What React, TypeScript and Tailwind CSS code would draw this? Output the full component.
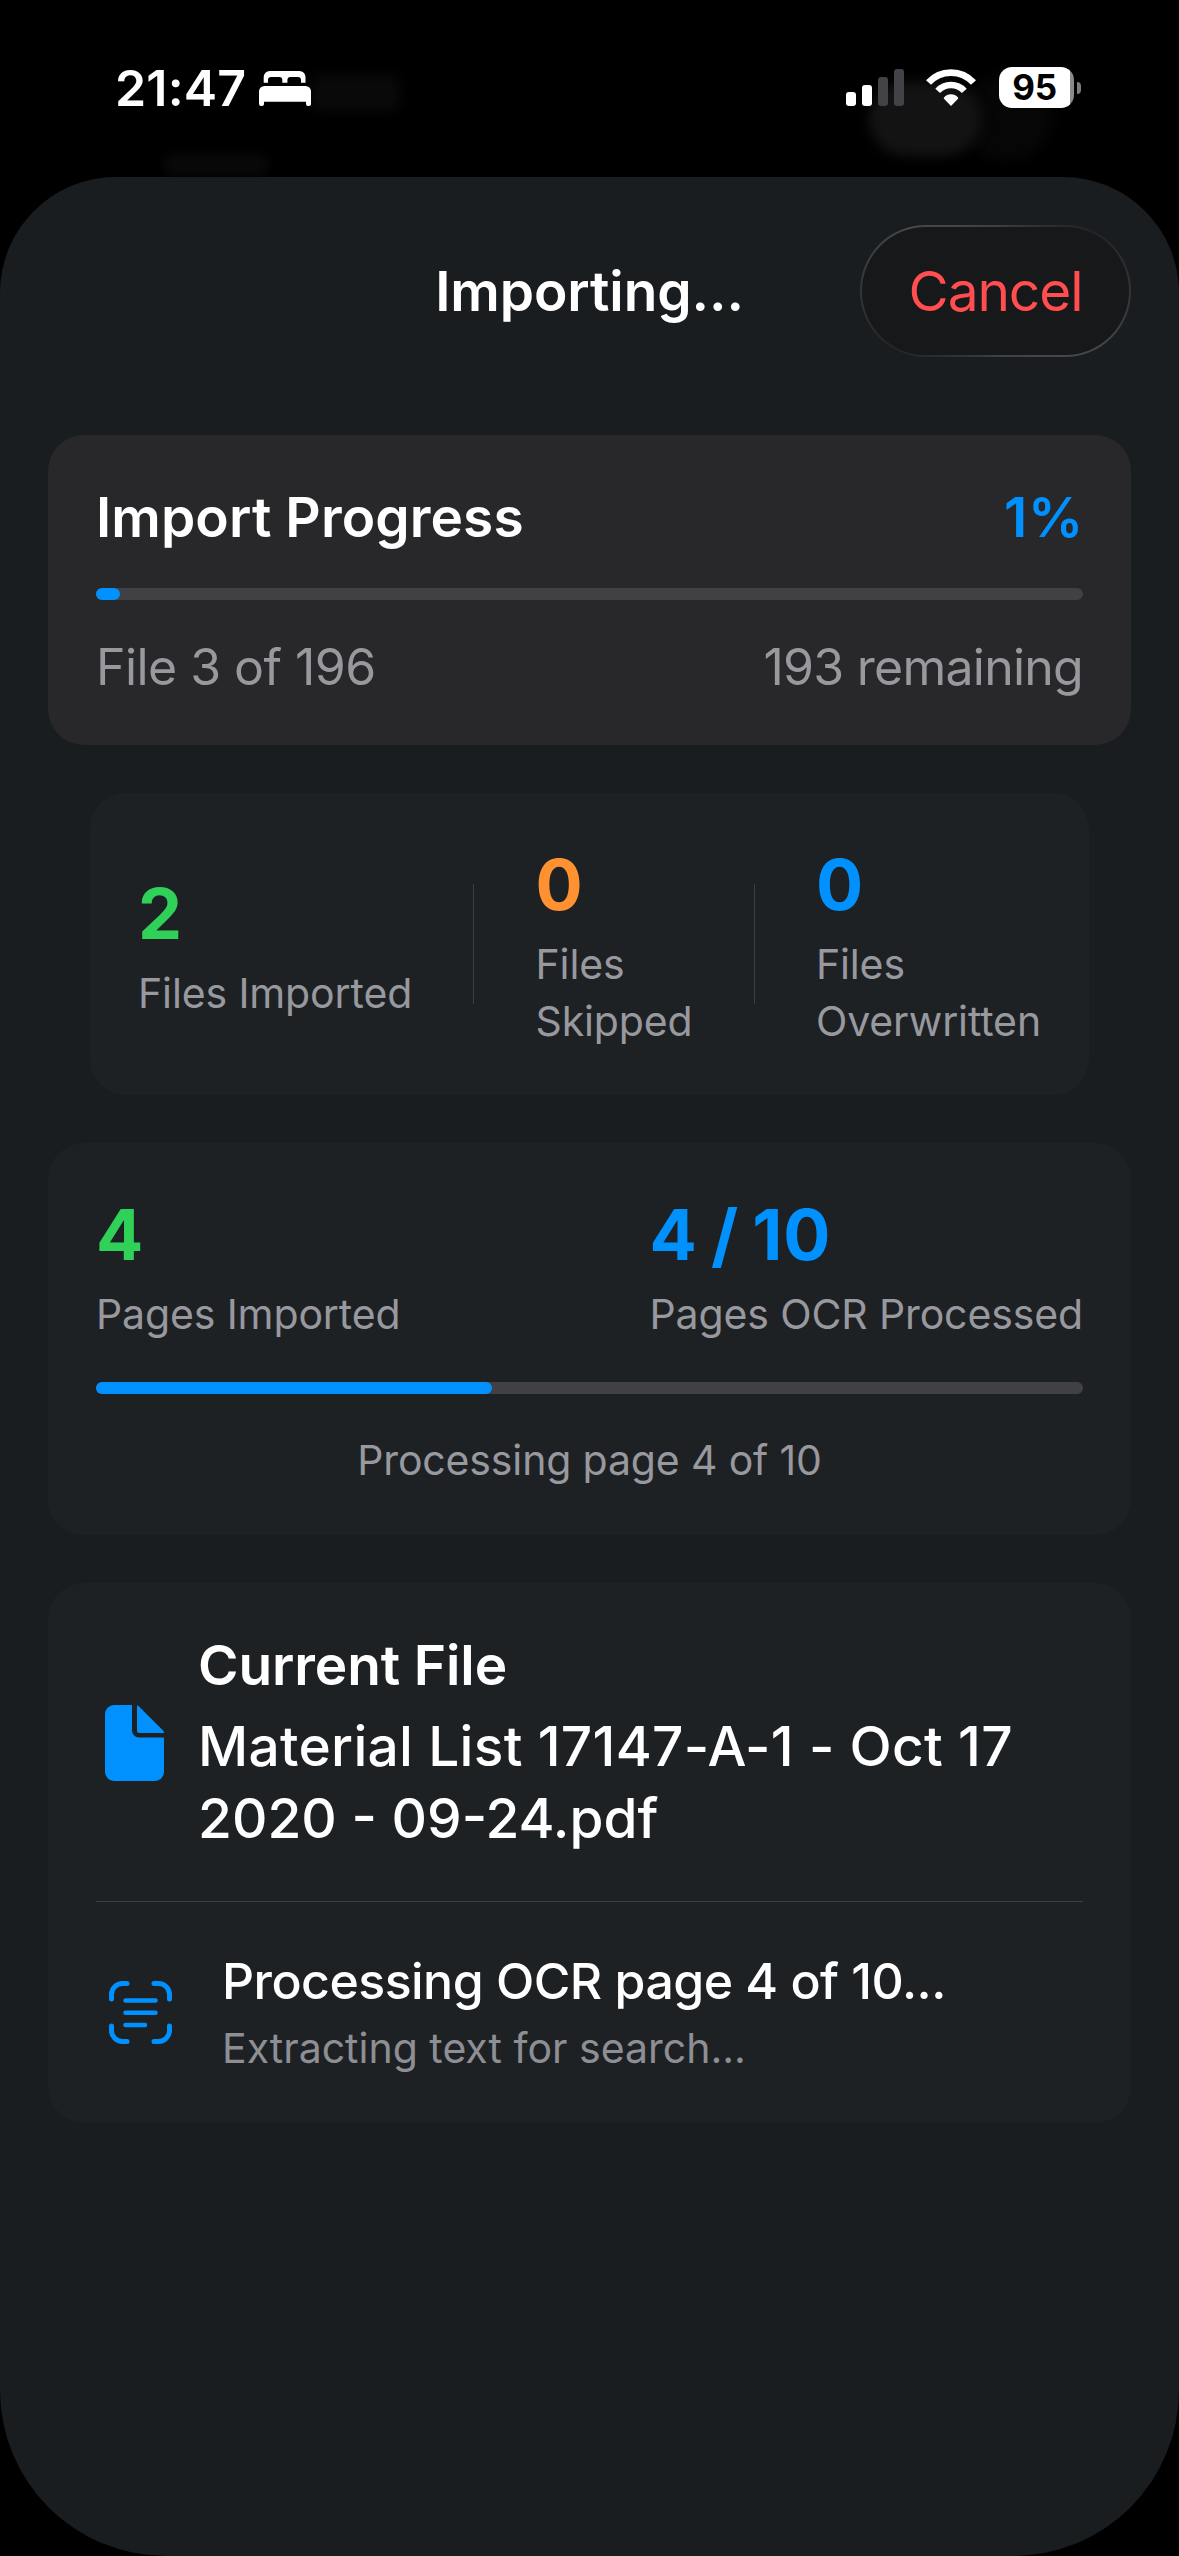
import type { ReactNode } from "react";

function BedIcon() {
  return (
    <svg width="52" height="35" viewBox="0 0 52 35" fill="white">
      <path d="M4.7 11.7V6a6 6 0 0 1 6-6h29.8a6 6 0 0 1 6 6v5.7h-4.5V9a3 3 0 0 0-3-3h-7.6a3 3 0 0 0-3 3v2.7h-5.1V9a3 3 0 0 0-3-3H12a3 3 0 0 0-3 3v2.7z" />
      <path d="M0 20.5a5.500 5.500 0 0 1 5.500-5.500h41a5.500 5.500 0 0 1 5.500 5.500V33a2 2 0 0 1-2 2h-1a2 2 0 0 1-2-2v-2.300H5V33a2 2 0 0 1-2 2H2a2 2 0 0 1-2-2z" />
    </svg>
  );
}

function SignalIcon() {
  return (
    <svg width="58" height="37" viewBox="0 0 58 37">
      <rect x="0" y="23" width="10" height="14" rx="3" fill="#fff" />
      <rect x="16" y="16" width="10" height="21" rx="3" fill="#fff" />
      <rect x="32" y="8" width="10" height="29" rx="3" fill="#434347" />
      <rect x="48" y="0" width="10" height="37" rx="3" fill="#434347" />
    </svg>
  );
}

function WifiIcon() {
  return (
    <svg width="50" height="37" viewBox="0 0 50 37" fill="none">
      <path d="M2.5 13.5a30.4 30.4 0 0 1 45 0" stroke="#fff" strokeWidth="6.8" />
      <path d="M11.7 21.9a18 18 0 0 1 26.6 0" stroke="#fff" strokeWidth="6.5" />
      <path d="M25 37l-7-7.3a1 1 0 0 1 0-1.3a9.500 9.500 0 0 1 14 0a1 1 0 0 1 0 1.300z" fill="#fff" />
    </svg>
  );
}

function Battery() {
  return (
    <div className="ml-px flex items-center gap-[3px]">
      <div className="flex h-[41px] w-[75px] items-center justify-center rounded-[13px] bg-[linear-gradient(90deg,#fff_71px,#8a8a8d_71px)] pr-[4px] text-[35px] leading-none font-bold tracking-[-0.3px] text-black">
        95
      </div>
      <div className="h-[12px] w-[4px] rounded-r-full bg-[#7d7d80]" />
    </div>
  );
}

function DocIcon() {
  return (
    <svg width="59" height="76" viewBox="0 0 59 76" fill="#0091ff">
      <path d="M9 0h18v25.5a7 7 0 0 0 7 7h25V67a9 9 0 0 1-9 9H9a9 9 0 0 1-9-9V9a9 9 0 0 1 9-9z" />
      <path d="M32 .5q1 0 2 1l23.8 23.8q1.200 1.200 1.200 2.700H34a2 2 0 0 1-2-2z" />
    </svg>
  );
}

function ScanTextIcon() {
  return (
    <svg className="mb-[4px]" width="63" height="63" viewBox="0 0 63 63" fill="none" stroke="#0091ff" strokeWidth="5" strokeLinecap="round">
      <path d="M2.5 18v-4.5a11 11 0 0 1 11-11H18M45 2.5h4.5a11 11 0 0 1 11 11V18M60.5 45v4.500a11 11 0 0 1-11 11H45M18 60.500h-4.500a11 11 0 0 1-11-11V45" />
      <path d="M16.5 19.5h30M16.5 31.7h30M16.5 44h19.5" strokeWidth="4.5" />
    </svg>
  );
}

function ProgressBar({ width }: { width: number }) {
  return (
    <div className="h-[12px] rounded-full bg-[#414145]">
      <div className="h-full rounded-full bg-[#0091ff]" style={{ width }} />
    </div>
  );
}

function Stat({ value, color, children }: { value: string; color: string; children: ReactNode }) {
  return (
    <div className="flex flex-col gap-[8px]">
      <span className={`text-[70px] leading-[87px] font-bold tracking-[0.8px] [word-spacing:-4px] ${color}`}>{value}</span>
      <span className="text-[41px] leading-[57px] tracking-[-0.12px] text-[#98989f]">{children}</span>
    </div>
  );
}

function Divider() {
  return <div className="mb-[3px] h-[120px] w-px bg-[#3e3f42]" />;
}

export default function App() {
  return (
    <div className="flex h-[2556px] w-[1179px] flex-col overflow-hidden bg-black font-[Inter,sans-serif] text-white">
      <header className="relative flex h-[177px] shrink-0 items-start justify-between overflow-hidden pt-[67px] pr-[98px] pl-[115px]">
        {/* dimmed content of the screen under the sheet */}
        <div className="absolute top-[76px] left-[960px] h-[84px] w-[92px] rounded-full bg-[#060606] blur-[6px]" />
        <div className="absolute top-[82px] left-[869px] h-[74px] w-[112px] rounded-full bg-[#131313] blur-[6px]" />
        <div className="absolute top-[74px] left-[312px] h-[38px] w-[88px] rounded-[12px] bg-[#090909] blur-[6px]" />
        <div className="absolute top-[154px] left-[164px] h-[22px] w-[104px] rounded-[8px] bg-[#080808] blur-[4px]" />

        <div className="relative flex items-center gap-[13px] pt-px">
          <span className="text-[50px] leading-[41px] font-semibold tracking-[0.2px]">21:47</span>
          <BedIcon />
        </div>
        <div className="relative flex items-center gap-[22px]">
          <SignalIcon />
          <WifiIcon />
          <Battery />
        </div>
      </header>

      <main className="flex flex-1 flex-col rounded-t-[116px] rounded-b-[166px] bg-[#1a1d20] px-[48px]">
        <div className="grid h-[258px] grid-cols-[1fr_auto_1fr] pt-[48px]">
          <h1 className="col-start-2 h-[132px] text-[55px] leading-[132px] font-semibold tracking-[-0.1px]">Importing...</h1>
          <div className="h-[132px] w-[271px] justify-self-end rounded-full bg-[conic-gradient(#3f4043,#232427_60deg,#36373a_95deg,#48484c_125deg,#3f4043_180deg,#232427_240deg,#36373a_275deg,#48484c_305deg,#3f4043)] p-[2px]">
            <button className="h-full w-full rounded-full bg-[#16181a] text-[55px] tracking-[-1.1px] text-[#ff4d50]">
              Cancel
            </button>
          </div>
        </div>

        <section className="flex flex-col rounded-[36px] bg-[#28282a] px-[48px] pt-[48px] pb-[47px]">
          <div className="flex justify-between text-[55px] leading-[69px] font-semibold">
            <h2 className="tracking-[0.1px]">Import Progress</h2>
            <span className="mr-[-1px] tracking-[0.8px] text-[#0091ff]">1%</span>
          </div>
          <div className="mt-[36px] mb-[37px]"><ProgressBar width={24} /></div>
          <div className="flex justify-between text-[50px] leading-[61px] text-[#98989f]">
            <span className="tracking-[-0.55px]">File 3 of 196</span>
            <span className="tracking-[-0.75px]">193 remaining</span>
          </div>
        </section>

        <section className="mx-[42px] mt-[48px] flex items-center justify-between rounded-[36px] bg-[#1e2124] px-[48px] pt-[48px] pb-[45px]">
          <Stat value="2" color="text-[#30d158]">Files Imported</Stat>
          <Divider />
          <Stat value="0" color="text-[#ff9230]">Files<br />Skipped</Stat>
          <Divider />
          <Stat value="0" color="text-[#0091ff]">Files<br />Overwritten</Stat>
        </section>

        <section className="mt-[48px] flex flex-col rounded-[36px] bg-[#1e2124] px-[48px] pt-[48px] pb-[46px]">
          <div className="flex justify-between">
            <Stat value="4" color="text-[#30d158]">Pages Imported</Stat>
            <Stat value="4 / 10" color="text-[#0091ff]">Pages OCR Processed</Stat>
          </div>
          <div className="mt-[39px] mb-[38px]"><ProgressBar width={396} /></div>
          <p className="text-center text-[41px] leading-[57px] tracking-[-0.15px] text-[#98989f]">Processing page 4 of 10</p>
        </section>

        <section className="mt-[48px] flex flex-col rounded-[36px] bg-[#1e2124] px-[48px] pt-[48px] pb-[46px]">
          <div className="flex items-center gap-[34px] pl-[9px]">
            <DocIcon />
            <div>
              <h2 className="text-[55px] leading-[69px] font-semibold tracking-[-0.1px]">Current File</h2>
              <p className="mt-[10px] text-[55px] leading-[72px] font-medium">
                <span className="tracking-[0.3px]">Material List 17147-A-1 - Oct 17</span>
                <br />
                2020 - 09-24.pdf
              </p>
            </div>
          </div>
          <div className="mt-[47px] mb-[49px] h-px bg-[#3e3f42]" />
          <div className="flex items-center gap-[50px] pl-[13px]">
            <ScanTextIcon />
            <div>
              <p className="text-[50px] leading-[61px] font-medium tracking-[-0.53px]">Processing OCR page 4 of 10...</p>
              <p className="mt-[8px] text-[41px] leading-[57px] text-[#8e8e95]">Extracting text for search...</p>
            </div>
          </div>
        </section>
      </main>
    </div>
  );
}
